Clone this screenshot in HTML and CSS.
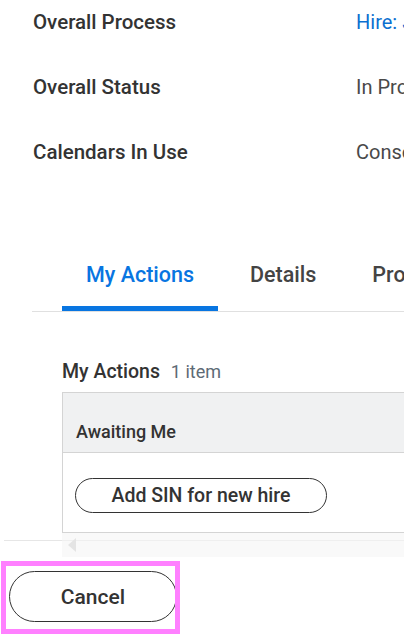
FILE: index.html
```html
<!DOCTYPE html>
<html>
<head>
<meta charset="utf-8">
<link rel="stylesheet" href="styles.css">
</head>
<body>
<div class="page">
  <div class="fields">
    <div class="row"><div class="label">Overall Process</div><div class="value link">Hire: Jordan Smith</div></div>
    <div class="row"><div class="label">Overall Status</div><div class="value">In Progress</div></div>
    <div class="row"><div class="label">Calendars In Use</div><div class="value">Consolidated</div></div>
  </div>

  <div class="tabs">
    <div class="tab active">My Actions</div>
    <div class="tab">Details</div>
    <div class="tab">Process</div>
  </div>

  <div class="section">
    <div class="section-title">My Actions <span class="count">1 item</span></div>
    <div class="grid">
      <div class="grid-head">Awaiting Me</div>
      <div class="grid-body"><button class="pill">Add SIN for new hire</button></div>
    </div>
  </div>

  <div class="scrollzone">
    <div class="strip"><span class="arrow"></span></div>
  </div>

  <div class="footer">
    <div class="highlight"><button class="pill cancel">Cancel</button></div>
  </div>
</div>
</body>
</html>
```

FILE: styles.css
```css
html, body {
  margin: 0;
  padding: 0;
  background: #fff;
  overflow: hidden;
}
body {
  font-family: Roboto, "Liberation Sans", sans-serif;
  color: #333;
  width: 404px;
  height: 635px;
}
.page {
  width: 404px;
  overflow: hidden;
}
.fields {
  margin-top: -11px;
}
.row {
  display: flex;
  align-items: center;
  height: 65px;
  padding-left: 33px;
  white-space: nowrap;
}
.label {
  width: 323px;
  flex: none;
  font-size: 20.5px;
  font-weight: 500;
  color: #333;
}
.value {
  font-size: 20px;
  color: #494949;
}
.value.link {
  color: #0b6fd0;
}
.tabs {
  display: flex;
  gap: 8px;
  margin-top: 57px;
  margin-left: 32px;
  padding-left: 30px;
  border-bottom: 1px solid #e0e0e0;
  white-space: nowrap;
}
.tab {
  flex: none;
  padding: 21px 24px 0;
  height: 70px;
  box-sizing: border-box;
  font-size: 21.5px;
  font-weight: 500;
  color: #444;
  border-bottom: 5px solid transparent;
  border-radius: 4px 4px 0 0;
}
.tab.active {
  color: #0875e1;
  border-bottom-color: #0875e1;
}
.section {
  padding-left: 62px;
  margin-top: 48px;
}
.section-title {
  font-size: 19.5px;
  font-weight: 500;
  color: #333;
  height: 24px;
  line-height: 24px;
  white-space: nowrap;
}
.count {
  font-size: 18px;
  font-weight: 400;
  color: #5e6a75;
  margin-left: 6px;
}
.grid {
  margin-top: 8px;
  width: 400px;
  border: 1px solid #d4d4d4;
}
.grid-head {
  height: 60px;
  box-sizing: border-box;
  background: #f0f1f2;
  border-bottom: 1px solid #d4d4d4;
  padding: 28px 0 0 13px;
  font-size: 18px;
  font-weight: 500;
  color: #333;
}
.grid-body {
  height: 79px;
  box-sizing: border-box;
  padding: 25px 0 0 12px;
}
.pill {
  font-family: Roboto, "Liberation Sans", sans-serif;
  background: #fff;
  border: 1.5px solid #333;
  border-radius: 20px;
  height: 35px;
  width: 252px;
  font-size: 19.5px;
  font-weight: 500;
  color: #333;
  padding: 0;
}
.scrollzone {
  position: relative;
  margin-left: 4px;
  height: 24px;
}
.scrollzone::before {
  content: "";
  position: absolute;
  left: 0;
  right: 0;
  top: 7px;
  border-top: 1px solid #e6e6e6;
}
.strip {
  margin-left: 58px;
  height: 24px;
  background: rgba(245, 245, 245, 0.6);
  position: relative;
}
.arrow {
  position: absolute;
  left: 6px;
  top: 5px;
  width: 0;
  height: 0;
  border-top: 7px solid transparent;
  border-bottom: 7px solid transparent;
  border-right: 8px solid #e4e4e4;
}
.footer {
  padding-left: 1px;
  padding-top: 4px;
}
.highlight {
  width: 179px;
  height: 73px;
  box-sizing: border-box;
  border: 5px solid #ff80ff;
  padding: 5px 0 0 3px;
  overflow: hidden;
}
.pill.cancel {
  width: 168px;
  height: 51px;
  border-radius: 26px;
  font-size: 21px;
}
```
